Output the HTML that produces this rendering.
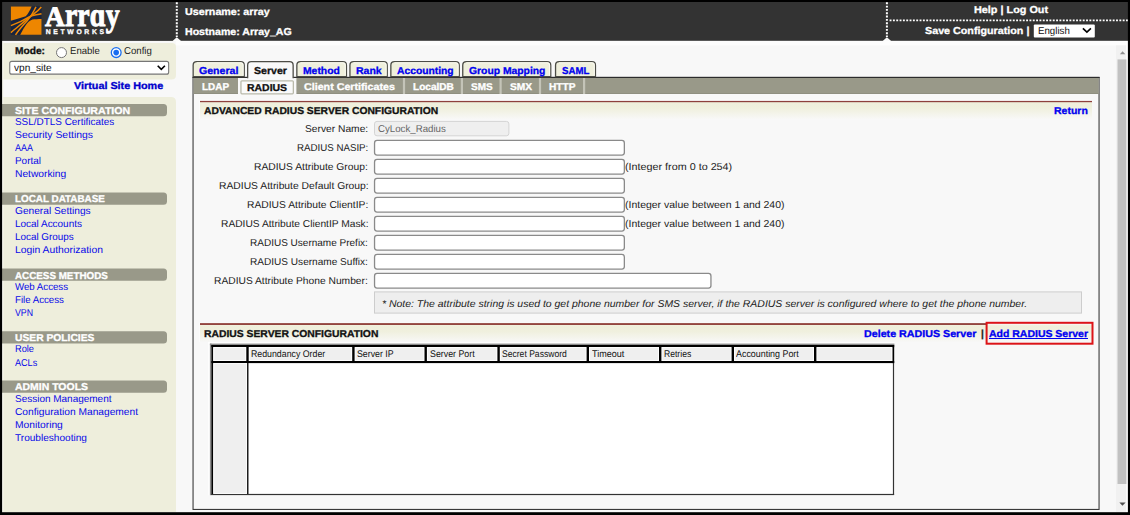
<!DOCTYPE html>
<html><head><meta charset="utf-8"><title>Array Networks</title>
<style>
html,body{margin:0;padding:0;}
body{width:1130px;height:515px;position:relative;overflow:hidden;background:#f8f8f8;font-family:"Liberation Sans",sans-serif;}
#art{position:absolute;left:0;top:0;display:block;}
.t{position:absolute;text-rendering:geometricPrecision;white-space:pre;transform-origin:0 50%;z-index:5;}

</style></head>
<body>
<svg id="art" width="1130" height="515" viewBox="0 0 1130 515">
<defs>
<linearGradient id="gb" x1="0" y1="0" x2="0" y2="1"><stop offset="0" stop-color="#f2f2de"/><stop offset="0.12" stop-color="#efefdb"/><stop offset="0.38" stop-color="#f0f0de"/><stop offset="1" stop-color="#f8f8f8"/></linearGradient>
</defs>
<rect x="0.00" y="0.00" width="1130.00" height="515.00" rx="0" fill="#f8f8f8" />
<rect x="2.00" y="2.00" width="1126.00" height="38.90" rx="0" fill="#333333" />
<rect x="176.00" y="40.90" width="952.00" height="4.40" rx="0" fill="#fdfdfd" />
<g>
<rect x="10.9" y="6.4" width="30.6" height="28.4" fill="#17233f"/>
<path d="M10.9,6.4 H31.6 C30.9,8.4 30,10.2 29,11.8 C28,13.6 27,15 25.8,16.3 C21,17.8 16,19.2 10.9,20.7 Z" fill="#ee8600"/>
<path d="M41.5,19.1 V34.8 H20.2 C21.4,32.6 22.4,30.6 23.3,29 C24.6,26.8 25.8,25 27.2,23.2 C28.8,21.6 30.4,20.4 32.4,19.6 C35,19.3 38,19.2 41.5,19.1 Z" fill="#ee8600"/>
<g fill="none" stroke="#ee8600" stroke-width="1.5">
<path d="M10.9,25.6 C17,23.4 22.5,21 27.8,17.6 S36,15.4 41.5,13.8"/>
<path d="M10.9,32.6 C15.5,28.6 21,24.4 26.8,19.4 S37,12.6 41.3,7"/>
<path d="M15.5,34.8 C18.5,30.4 22.5,25.6 27.4,20.4 S33.4,11.6 36,6.8"/>
</g></g>
<g stroke="#fff" stroke-width="2" stroke-dasharray="1.9 1.43" fill="none">
<path d="M176.8,2.3 V37"/><path d="M886.9,2.3 V37"/><path d="M889.6,20.4 H1128" stroke-width="1.9"/></g>
<path d="M172.60000000000002,41 L176.8,37.2 L181.0,41 Z" fill="#fbfbfb"/>
<path d="M882.6999999999999,41 L886.9,37.2 L891.1,41 Z" fill="#fbfbfb"/>
<rect x="1033.80" y="24.60" width="61.00" height="12.80" rx="1" fill="#fff" />
<path d="M1082.9,28.4 L1086.9,32.2 L1090.9,28.4" fill="none" stroke="#000" stroke-width="1.6"/>
<path d="M2,43 H172 Q176,43 176,47 V75 Q176,79.5 171.5,79.5 H2 Z" fill="#eeeedc"/>
<path d="M2,97 H171 Q176,97 176,102 V512 H2 Z" fill="#eeeedc"/>
<rect x="2.00" y="41.00" width="1.40" height="471.00" rx="0" fill="#f7f7ee" />
<circle cx="61.5" cy="52.6" r="5" fill="#fff" stroke="#767676" stroke-width="1"/>
<circle cx="116.2" cy="52.6" r="4.9" fill="#fff" stroke="#1a6ef0" stroke-width="1.3"/>
<circle cx="116.2" cy="52.6" r="2.8" fill="#1a6ef0"/>
<rect x="9.75" y="61.35" width="158.90" height="12.80" rx="2" fill="#fff" stroke="#767676" stroke-width="1.1" />
<path d="M157.7,65.8 L161.3,69.4 L164.9,65.8" fill="none" stroke="#000" stroke-width="1.6"/>
<path d="M2,104.0 H163.5 Q167,104.0 167,107.5 V112.7 Q167,116.2 163.5,116.2 H2 Z" fill="#999989"/>
<path d="M2,192.6 H163.5 Q167,192.6 167,196.1 V201.29999999999998 Q167,204.79999999999998 163.5,204.79999999999998 H2 Z" fill="#999989"/>
<path d="M2,268.5 H163.5 Q167,268.5 167,272.0 V277.2 Q167,280.7 163.5,280.7 H2 Z" fill="#999989"/>
<path d="M2,331.3 H163.5 Q167,331.3 167,334.8 V340.0 Q167,343.5 163.5,343.5 H2 Z" fill="#999989"/>
<path d="M2,380.5 H163.5 Q167,380.5 167,384.0 V389.2 Q167,392.7 163.5,392.7 H2 Z" fill="#999989"/>
<rect x="193.05" y="77.55" width="906.00" height="431.90" rx="0" fill="none" stroke="#3a3a3a" stroke-width="1.1" />
<rect x="193.50" y="78.00" width="905.10" height="16.00" rx="0" fill="#999989" />
<rect x="193.50" y="93.00" width="905.10" height="1.00" rx="0" fill="#8f8f80" />
<rect x="402.90" y="78.00" width="2.20" height="16.00" rx="0" fill="#c4c4b8" />
<rect x="460.80" y="78.00" width="2.20" height="16.00" rx="0" fill="#c4c4b8" />
<rect x="499.50" y="78.00" width="2.20" height="16.00" rx="0" fill="#c4c4b8" />
<rect x="538.90" y="78.00" width="2.20" height="16.00" rx="0" fill="#c4c4b8" />
<rect x="583.00" y="78.00" width="2.20" height="16.00" rx="0" fill="#c4c4b8" />
<rect x="238.00" y="78.00" width="58.40" height="16.30" rx="0" fill="#f8f8f8" />
<rect x="240.95" y="80.85" width="52.40" height="13.00" rx="1" fill="#fafafa" stroke="#b9b9aa" stroke-width="1.3" />
<rect x="192.50" y="76.80" width="907.10" height="1.20" rx="0" fill="#2c2c2c" />
<path d="M193.15,76.7 V65.2 Q193.15,61.65 196.7,61.65 H240.70000000000002 Q244.25,61.65 244.25,65.2 V76.7 Z" fill="#efefdc" stroke="#4c4c46" stroke-width="1.3"/>
<path d="M196.7,62.8 H240.70000000000002 Q243.1,62.8 243.1,65.2 V75.7" fill="none" stroke="#fbfbf1" stroke-width="1.1"/>
<path d="M296.84999999999997,76.7 V65.2 Q296.84999999999997,61.65 300.4,61.65 H342.90000000000003 Q346.45000000000005,61.65 346.45000000000005,65.2 V76.7 Z" fill="#efefdc" stroke="#4c4c46" stroke-width="1.3"/>
<path d="M300.4,62.8 H342.90000000000003 Q345.3,62.8 345.3,65.2 V75.7" fill="none" stroke="#fbfbf1" stroke-width="1.1"/>
<path d="M349.95,76.7 V65.2 Q349.95,61.65 353.5,61.65 H383.7 Q387.25,61.65 387.25,65.2 V76.7 Z" fill="#efefdc" stroke="#4c4c46" stroke-width="1.3"/>
<path d="M353.5,62.8 H383.7 Q386.09999999999997,62.8 386.09999999999997,65.2 V75.7" fill="none" stroke="#fbfbf1" stroke-width="1.1"/>
<path d="M390.84999999999997,76.7 V65.2 Q390.84999999999997,61.65 394.4,61.65 H455.7 Q459.25,61.65 459.25,65.2 V76.7 Z" fill="#efefdc" stroke="#4c4c46" stroke-width="1.3"/>
<path d="M394.4,62.8 H455.7 Q458.09999999999997,62.8 458.09999999999997,65.2 V75.7" fill="none" stroke="#fbfbf1" stroke-width="1.1"/>
<path d="M462.75,76.7 V65.2 Q462.75,61.65 466.3,61.65 H547.1999999999999 Q550.75,61.65 550.75,65.2 V76.7 Z" fill="#efefdc" stroke="#4c4c46" stroke-width="1.3"/>
<path d="M466.3,62.8 H547.1999999999999 Q549.6,62.8 549.6,65.2 V75.7" fill="none" stroke="#fbfbf1" stroke-width="1.1"/>
<path d="M555.55,76.7 V65.2 Q555.55,61.65 559.1,61.65 H591.9 Q595.45,61.65 595.45,65.2 V76.7 Z" fill="#efefdc" stroke="#4c4c46" stroke-width="1.3"/>
<path d="M559.1,62.8 H591.9 Q594.3000000000001,62.8 594.3000000000001,65.2 V75.7" fill="none" stroke="#fbfbf1" stroke-width="1.1"/>
<path d="M247.65,78.2 V65.2 Q247.65,61.65 251.2,61.65 H289.6 Q293.15000000000003,61.65 293.15000000000003,65.2 V78.2 Z" fill="#f9f9f9"/>
<path d="M247.65,78.2 V65.2 Q247.65,61.65 251.2,61.65 H289.6 Q293.15000000000003,61.65 293.15000000000003,65.2 V78.2" fill="none" stroke="#4c4c46" stroke-width="1.3"/>
<rect x="199.00" y="99.80" width="893.00" height="1.40" rx="0" fill="#fdfdfd" />
<rect x="199.00" y="99.80" width="1.00" height="19.20" rx="0" fill="#fbfbfb" />
<rect x="200.00" y="101.60" width="892.00" height="17.90" rx="0" fill="url(#gb)" />
<rect x="200.00" y="100.90" width="892.00" height="1.30" rx="0" fill="#8e403c" />
<rect x="374.50" y="121.40" width="134.40" height="14.40" rx="2.5" fill="#efefef" stroke="#d4d4d4" stroke-width="1" />
<rect x="374.55" y="140.45" width="249.80" height="14.60" rx="2.5" fill="#fff" stroke="#8a8a8a" stroke-width="1.3" />
<rect x="374.55" y="159.45" width="249.80" height="14.60" rx="2.5" fill="#fff" stroke="#8a8a8a" stroke-width="1.3" />
<rect x="374.55" y="178.45" width="249.80" height="14.60" rx="2.5" fill="#fff" stroke="#8a8a8a" stroke-width="1.3" />
<rect x="374.55" y="197.45" width="249.80" height="14.60" rx="2.5" fill="#fff" stroke="#8a8a8a" stroke-width="1.3" />
<rect x="374.55" y="216.45" width="249.80" height="14.60" rx="2.5" fill="#fff" stroke="#8a8a8a" stroke-width="1.3" />
<rect x="374.55" y="235.45" width="249.80" height="14.60" rx="2.5" fill="#fff" stroke="#8a8a8a" stroke-width="1.3" />
<rect x="374.55" y="254.45" width="249.80" height="14.60" rx="2.5" fill="#fff" stroke="#8a8a8a" stroke-width="1.3" />
<rect x="374.55" y="273.45" width="336.40" height="14.60" rx="2.5" fill="#fff" stroke="#8a8a8a" stroke-width="1.3" />
<rect x="374.50" y="291.90" width="707.00" height="21.20" rx="0" fill="#eeeeee" stroke="#cdcdcd" stroke-width="1" />
<rect x="199.00" y="322.80" width="788.00" height="1.40" rx="0" fill="#fdfdfd" />
<rect x="199.00" y="322.80" width="1.00" height="19.20" rx="0" fill="#fbfbfb" />
<rect x="200.00" y="324.60" width="892.00" height="17.90" rx="0" fill="url(#gb)" />
<rect x="200.00" y="323.10" width="787.00" height="1.90" rx="0" fill="#93453f" />
<rect x="986.60" y="322.80" width="105.90" height="20.90" rx="0" fill="none" stroke="#dc1418" stroke-width="2" />
<rect x="210.20" y="343.80" width="684.20" height="151.40" rx="0" fill="#fff" />
<rect x="208.20" y="341.90" width="686.20" height="1.80" rx="0" fill="#fefefe" />
<rect x="208.20" y="341.90" width="1.80" height="153.30" rx="0" fill="#fefefe" />
<rect x="209.90" y="343.60" width="1.60" height="151.60" rx="0" fill="#8c8c8c" />
<rect x="209.90" y="343.60" width="684.50" height="1.60" rx="0" fill="#8c8c8c" />
<rect x="211.40" y="345.00" width="682.80" height="2.10" rx="0" fill="#000" />
<rect x="211.40" y="345.00" width="1.90" height="150.00" rx="0" fill="#000" />
<rect x="211.40" y="361.00" width="682.80" height="2.10" rx="0" fill="#000" />
<rect x="892.30" y="345.00" width="1.90" height="18.10" rx="0" fill="#000" />
<rect x="892.90" y="363.00" width="1.20" height="132.00" rx="0" fill="#333" />
<rect x="211.40" y="493.90" width="682.70" height="1.20" rx="0" fill="#333" />
<rect x="213.80" y="363.60" width="32.70" height="129.80" rx="0" fill="#efefef" stroke="#fbfbfb" stroke-width="1" />
<rect x="247.00" y="363.00" width="1.50" height="131.00" rx="0" fill="#1c1c1c" />
<rect x="213.80" y="347.60" width="32.00" height="12.90" rx="0" fill="#efefef" stroke="#fdfdfd" stroke-width="1" />
<rect x="249.20" y="347.60" width="102.50" height="12.90" rx="0" fill="#efefef" stroke="#fdfdfd" stroke-width="1" />
<rect x="355.10" y="347.60" width="68.90" height="12.90" rx="0" fill="#efefef" stroke="#fdfdfd" stroke-width="1" />
<rect x="427.40" y="347.60" width="69.50" height="12.90" rx="0" fill="#efefef" stroke="#fdfdfd" stroke-width="1" />
<rect x="500.30" y="347.60" width="85.80" height="12.90" rx="0" fill="#efefef" stroke="#fdfdfd" stroke-width="1" />
<rect x="589.50" y="347.60" width="69.00" height="12.90" rx="0" fill="#efefef" stroke="#fdfdfd" stroke-width="1" />
<rect x="661.90" y="347.60" width="69.20" height="12.90" rx="0" fill="#efefef" stroke="#fdfdfd" stroke-width="1" />
<rect x="734.50" y="347.60" width="79.00" height="12.90" rx="0" fill="#efefef" stroke="#fdfdfd" stroke-width="1" />
<rect x="816.90" y="347.60" width="74.90" height="12.90" rx="0" fill="#efefef" stroke="#fdfdfd" stroke-width="1" />
<rect x="246.30" y="347.00" width="2.40" height="14.10" rx="0" fill="#000" />
<rect x="352.20" y="347.00" width="2.40" height="14.10" rx="0" fill="#000" />
<rect x="424.50" y="347.00" width="2.40" height="14.10" rx="0" fill="#000" />
<rect x="497.40" y="347.00" width="2.40" height="14.10" rx="0" fill="#000" />
<rect x="586.60" y="347.00" width="2.40" height="14.10" rx="0" fill="#000" />
<rect x="659.00" y="347.00" width="2.40" height="14.10" rx="0" fill="#000" />
<rect x="731.60" y="347.00" width="2.40" height="14.10" rx="0" fill="#000" />
<rect x="814.00" y="347.00" width="2.40" height="14.10" rx="0" fill="#000" />
<rect x="1116.00" y="45.40" width="10.30" height="466.60" rx="0" fill="#f1f1f1" />
<rect x="1126.30" y="41.00" width="1.70" height="471.00" rx="0" fill="#fefefe" />
<rect x="1117.50" y="59.40" width="8.90" height="424.60" rx="0" fill="#c1c1c1" />
<path d="M1119.9,54.2 L1122.6,51.2 L1125.3,54.2 Z" fill="#8f8f8f"/>
<path d="M1119.4,502.5 L1122.5,505.8 L1125.6,502.5 Z" fill="#505050"/>
<rect x="0.00" y="0.00" width="1130.00" height="2.00" rx="0" fill="#000" />
<rect x="0.00" y="0.00" width="2.10" height="515.00" rx="0" fill="#000" />
<rect x="1127.90" y="0.00" width="2.10" height="515.00" rx="0" fill="#000" />
<rect x="0.00" y="512.20" width="1130.00" height="2.80" rx="0" fill="#000" />
</svg>
<span class="t" style="left:44.5px;top:4px;font:normal bold 28.0px/1 'Liberation Serif', serif;color:#fff;transform:scaleX(0.9785);-webkit-text-stroke:1.0px #fff;">A</span>
<span class="t" style="left:65.4px;top:-1px;font:normal bold 33.5px/1 'Liberation Serif', serif;color:#fff;transform:scaleX(0.8304);-webkit-text-stroke:1.0px #fff;">rrɑy</span>
<span class="t" style="left:45.8px;top:30px;font:normal bold 6.8px/1 'Liberation Sans', sans-serif;color:#fff;letter-spacing:2.649px;-webkit-text-stroke:0.3px #fff;">NETWORKS</span>
<span class="t" style="left:184.8px;top:8px;font:normal bold 10.0px/1 'Liberation Sans', sans-serif;color:#fff;transform:scaleX(1.0717);-webkit-text-stroke:0.3px #fff;">Username: array</span>
<span class="t" style="left:184.8px;top:28px;font:normal bold 10.0px/1 'Liberation Sans', sans-serif;color:#fff;transform:scaleX(1.0587);-webkit-text-stroke:0.3px #fff;">Hostname: Array_AG</span>
<span class="t" style="left:973.5px;top:6px;font:normal bold 10.0px/1 'Liberation Sans', sans-serif;color:#fff;transform:scaleX(1.0840);-webkit-text-stroke:0.3px #fff;">Help | Log Out</span>
<span class="t" style="left:924.8px;top:27px;font:normal bold 10.0px/1 'Liberation Sans', sans-serif;color:#fff;transform:scaleX(1.0733);-webkit-text-stroke:0.3px #fff;">Save Configuration |</span>
<span class="t" style="left:1037.8px;top:27px;font:normal normal 10.0px/1 'Liberation Sans', sans-serif;color:#111;transform:scaleX(0.9691);">English</span>
<span class="t" style="left:15.4px;top:47px;font:normal bold 10.0px/1 'Liberation Sans', sans-serif;color:#111;transform:scaleX(1.0186);-webkit-text-stroke:0.3px #111;">Mode:</span>
<span class="t" style="left:70.0px;top:47px;font:normal normal 10.0px/1 'Liberation Sans', sans-serif;color:#222;transform:scaleX(0.9569);">Enable</span>
<span class="t" style="left:124.2px;top:47px;font:normal normal 10.0px/1 'Liberation Sans', sans-serif;color:#222;transform:scaleX(0.9617);">Config</span>
<span class="t" style="left:14.0px;top:64px;font:normal normal 10.0px/1 'Liberation Sans', sans-serif;color:#111;transform:scaleX(1.0121);">vpn_site</span>
<span class="t" style="left:73.5px;top:82px;font:normal bold 10.0px/1 'Liberation Sans', sans-serif;color:#0000cc;transform:scaleX(1.0796);-webkit-text-stroke:0.3px #0000cc;">Virtual Site Home</span>
<span class="t" style="left:15.0px;top:107px;font:normal bold 10.0px/1 'Liberation Sans', sans-serif;color:#fff;transform:scaleX(1.0598);-webkit-text-stroke:0.3px #fff;">SITE CONFIGURATION</span>
<span class="t" style="left:15.2px;top:118px;font:normal normal 10.0px/1 'Liberation Sans', sans-serif;color:#0808e8;transform:scaleX(0.9925);">SSL/DTLS Certificates</span>
<span class="t" style="left:15.2px;top:131px;font:normal normal 10.0px/1 'Liberation Sans', sans-serif;color:#0808e8;transform:scaleX(1.0394);">Security Settings</span>
<span class="t" style="left:15.2px;top:144px;font:normal normal 10.0px/1 'Liberation Sans', sans-serif;color:#0808e8;transform:scaleX(0.8993);">AAA</span>
<span class="t" style="left:15.2px;top:157px;font:normal normal 10.0px/1 'Liberation Sans', sans-serif;color:#0808e8;transform:scaleX(0.9914);">Portal</span>
<span class="t" style="left:15.2px;top:170px;font:normal normal 10.0px/1 'Liberation Sans', sans-serif;color:#0808e8;transform:scaleX(1.0234);">Networking</span>
<span class="t" style="left:15.0px;top:195px;font:normal bold 10.0px/1 'Liberation Sans', sans-serif;color:#fff;transform:scaleX(0.9867);-webkit-text-stroke:0.3px #fff;">LOCAL DATABASE</span>
<span class="t" style="left:15.2px;top:207px;font:normal normal 10.0px/1 'Liberation Sans', sans-serif;color:#0808e8;transform:scaleX(1.0161);">General Settings</span>
<span class="t" style="left:15.2px;top:220px;font:normal normal 10.0px/1 'Liberation Sans', sans-serif;color:#0808e8;transform:scaleX(0.9946);">Local Accounts</span>
<span class="t" style="left:15.2px;top:233px;font:normal normal 10.0px/1 'Liberation Sans', sans-serif;color:#0808e8;transform:scaleX(0.9868);">Local Groups</span>
<span class="t" style="left:15.2px;top:246px;font:normal normal 10.0px/1 'Liberation Sans', sans-serif;color:#0808e8;transform:scaleX(1.0332);">Login Authorization</span>
<span class="t" style="left:15.0px;top:272px;font:normal bold 10.0px/1 'Liberation Sans', sans-serif;color:#fff;transform:scaleX(0.9825);-webkit-text-stroke:0.3px #fff;">ACCESS METHODS</span>
<span class="t" style="left:15.2px;top:283px;font:normal normal 10.0px/1 'Liberation Sans', sans-serif;color:#0808e8;transform:scaleX(0.9664);">Web Access</span>
<span class="t" style="left:15.2px;top:296px;font:normal normal 10.0px/1 'Liberation Sans', sans-serif;color:#0808e8;transform:scaleX(0.9668);">File Access</span>
<span class="t" style="left:15.2px;top:309px;font:normal normal 10.0px/1 'Liberation Sans', sans-serif;color:#0808e8;transform:scaleX(0.8754);">VPN</span>
<span class="t" style="left:15.0px;top:334px;font:normal bold 10.0px/1 'Liberation Sans', sans-serif;color:#fff;transform:scaleX(1.0278);-webkit-text-stroke:0.3px #fff;">USER POLICIES</span>
<span class="t" style="left:15.2px;top:345px;font:normal normal 10.0px/1 'Liberation Sans', sans-serif;color:#0808e8;transform:scaleX(0.9233);">Role</span>
<span class="t" style="left:15.2px;top:359px;font:normal normal 10.0px/1 'Liberation Sans', sans-serif;color:#0808e8;transform:scaleX(0.9079);">ACLs</span>
<span class="t" style="left:15.0px;top:383px;font:normal bold 10.0px/1 'Liberation Sans', sans-serif;color:#fff;transform:scaleX(1.0454);-webkit-text-stroke:0.3px #fff;">ADMIN TOOLS</span>
<span class="t" style="left:15.2px;top:395px;font:normal normal 10.0px/1 'Liberation Sans', sans-serif;color:#0808e8;transform:scaleX(0.9976);">Session Management</span>
<span class="t" style="left:15.2px;top:408px;font:normal normal 10.0px/1 'Liberation Sans', sans-serif;color:#0808e8;transform:scaleX(1.0196);">Configuration Management</span>
<span class="t" style="left:15.2px;top:421px;font:normal normal 10.0px/1 'Liberation Sans', sans-serif;color:#0808e8;transform:scaleX(1.0235);">Monitoring</span>
<span class="t" style="left:15.2px;top:434px;font:normal normal 10.0px/1 'Liberation Sans', sans-serif;color:#0808e8;transform:scaleX(1.0078);">Troubleshooting</span>
<span class="t" style="left:198.8px;top:67px;font:normal bold 10.0px/1 'Liberation Sans', sans-serif;color:#0000f0;transform:scaleX(1.0577);-webkit-text-stroke:0.3px #0000f0;">General</span>
<span class="t" style="left:253.8px;top:67px;font:normal bold 10.0px/1 'Liberation Sans', sans-serif;color:#111;transform:scaleX(1.0597);-webkit-text-stroke:0.3px #111;">Server</span>
<span class="t" style="left:303.2px;top:67px;font:normal bold 10.0px/1 'Liberation Sans', sans-serif;color:#0000f0;transform:scaleX(1.0353);-webkit-text-stroke:0.3px #0000f0;">Method</span>
<span class="t" style="left:355.8px;top:67px;font:normal bold 10.0px/1 'Liberation Sans', sans-serif;color:#0000f0;transform:scaleX(1.0510);-webkit-text-stroke:0.3px #0000f0;">Rank</span>
<span class="t" style="left:396.5px;top:67px;font:normal bold 10.0px/1 'Liberation Sans', sans-serif;color:#0000f0;transform:scaleX(1.0291);-webkit-text-stroke:0.3px #0000f0;">Accounting</span>
<span class="t" style="left:469.3px;top:67px;font:normal bold 10.0px/1 'Liberation Sans', sans-serif;color:#0000f0;transform:scaleX(1.0340);-webkit-text-stroke:0.3px #0000f0;">Group Mapping</span>
<span class="t" style="left:561.5px;top:67px;font:normal bold 10.0px/1 'Liberation Sans', sans-serif;color:#0000f0;transform:scaleX(0.9667);-webkit-text-stroke:0.3px #0000f0;">SAML</span>
<span class="t" style="left:202.3px;top:83px;font:normal bold 9.8px/1 'Liberation Sans', sans-serif;color:#fff;transform:scaleX(1.0123);-webkit-text-stroke:0.3px #fff;">LDAP</span>
<span class="t" style="left:247.1px;top:84px;font:normal bold 9.8px/1 'Liberation Sans', sans-serif;color:#111;transform:scaleX(1.0676);-webkit-text-stroke:0.3px #111;">RADIUS</span>
<span class="t" style="left:304.4px;top:83px;font:normal bold 9.8px/1 'Liberation Sans', sans-serif;color:#fff;transform:scaleX(1.0911);-webkit-text-stroke:0.3px #fff;">Client Certificates</span>
<span class="t" style="left:412.6px;top:83px;font:normal bold 9.8px/1 'Liberation Sans', sans-serif;color:#fff;transform:scaleX(1.0289);-webkit-text-stroke:0.3px #fff;">LocalDB</span>
<span class="t" style="left:470.8px;top:83px;font:normal bold 9.8px/1 'Liberation Sans', sans-serif;color:#fff;transform:scaleX(1.0172);-webkit-text-stroke:0.3px #fff;">SMS</span>
<span class="t" style="left:509.6px;top:83px;font:normal bold 9.8px/1 'Liberation Sans', sans-serif;color:#fff;transform:scaleX(1.0408);-webkit-text-stroke:0.3px #fff;">SMX</span>
<span class="t" style="left:549.0px;top:83px;font:normal bold 9.8px/1 'Liberation Sans', sans-serif;color:#fff;transform:scaleX(1.0321);-webkit-text-stroke:0.3px #fff;">HTTP</span>
<span class="t" style="left:204.1px;top:107px;font:normal bold 10.0px/1 'Liberation Sans', sans-serif;color:#111;transform:scaleX(1.0306);-webkit-text-stroke:0.3px #111;">ADVANCED RADIUS SERVER CONFIGURATION</span>
<span class="t" style="left:1053.8px;top:107px;font:normal bold 10.0px/1 'Liberation Sans', sans-serif;color:#0000f0;transform:scaleX(1.0486);-webkit-text-stroke:0.3px #0000f0;">Return</span>
<span class="t" style="left:204.3px;top:330px;font:normal bold 10.0px/1 'Liberation Sans', sans-serif;color:#111;transform:scaleX(1.0348);-webkit-text-stroke:0.3px #111;">RADIUS SERVER CONFIGURATION</span>
<span class="t" style="left:864.3px;top:330px;font:normal bold 10.0px/1 'Liberation Sans', sans-serif;color:#0000f0;transform:scaleX(1.0690);-webkit-text-stroke:0.3px #0000f0;">Delete RADIUS Server</span>
<span class="t" style="left:980.8px;top:330px;font:normal bold 10.0px/1 'Liberation Sans', sans-serif;color:#222;transform:scaleX(0.9956);-webkit-text-stroke:0.3px #222;">|</span>
<span class="t" style="left:988.5px;top:330px;font:normal bold 10.0px/1 'Liberation Sans', sans-serif;color:#0000f0;transform:scaleX(1.0480);text-decoration:underline;-webkit-text-stroke:0.3px #0000f0;">Add RADIUS Server</span>
<span class="t" style="left:305.0px;top:125px;font:normal normal 10.0px/1 'Liberation Sans', sans-serif;color:#222;transform:scaleX(1.0245);">Server Name:</span>
<span class="t" style="left:296.9px;top:144px;font:normal normal 10.0px/1 'Liberation Sans', sans-serif;color:#222;transform:scaleX(0.9719);">RADIUS NASIP:</span>
<span class="t" style="left:254.4px;top:163px;font:normal normal 10.0px/1 'Liberation Sans', sans-serif;color:#222;transform:scaleX(1.0288);">RADIUS Attribute Group:</span>
<span class="t" style="left:218.5px;top:182px;font:normal normal 10.0px/1 'Liberation Sans', sans-serif;color:#222;transform:scaleX(1.0319);">RADIUS Attribute Default Group:</span>
<span class="t" style="left:246.9px;top:201px;font:normal normal 10.0px/1 'Liberation Sans', sans-serif;color:#222;transform:scaleX(1.0295);">RADIUS Attribute ClientIP:</span>
<span class="t" style="left:220.7px;top:220px;font:normal normal 10.0px/1 'Liberation Sans', sans-serif;color:#222;transform:scaleX(1.0221);">RADIUS Attribute ClientIP Mask:</span>
<span class="t" style="left:250.3px;top:239px;font:normal normal 10.0px/1 'Liberation Sans', sans-serif;color:#222;transform:scaleX(1.0007);">RADIUS Username Prefix:</span>
<span class="t" style="left:250.3px;top:258px;font:normal normal 10.0px/1 'Liberation Sans', sans-serif;color:#222;transform:scaleX(1.0070);">RADIUS Username Suffix:</span>
<span class="t" style="left:214.4px;top:277px;font:normal normal 10.0px/1 'Liberation Sans', sans-serif;color:#222;transform:scaleX(1.0248);">RADIUS Attribute Phone Number:</span>
<span class="t" style="left:377.6px;top:125px;font:normal normal 10.0px/1 'Liberation Sans', sans-serif;color:#666;transform:scaleX(0.9679);">CyLock_Radius</span>
<span class="t" style="left:625.4px;top:163px;font:normal normal 10.0px/1 'Liberation Sans', sans-serif;color:#222;transform:scaleX(1.0774);">(Integer from 0 to 254)</span>
<span class="t" style="left:625.4px;top:201px;font:normal normal 10.0px/1 'Liberation Sans', sans-serif;color:#222;transform:scaleX(1.0470);">(Integer value between 1 and 240)</span>
<span class="t" style="left:625.4px;top:220px;font:normal normal 10.0px/1 'Liberation Sans', sans-serif;color:#222;transform:scaleX(1.0470);">(Integer value between 1 and 240)</span>
<span class="t" style="left:382.1px;top:300px;font:italic normal 10.0px/1 'Liberation Sans', sans-serif;color:#222;transform:scaleX(1.0453);">* Note: The attribute string is used to get phone number for SMS server, if the RADIUS server is configured where to get the phone number.</span>
<span class="t" style="left:250.8px;top:350px;font:normal normal 9.7px/1 'Liberation Sans', sans-serif;color:#111;transform:scaleX(0.9064);">Redundancy Order</span>
<span class="t" style="left:356.9px;top:350px;font:normal normal 9.7px/1 'Liberation Sans', sans-serif;color:#111;transform:scaleX(0.9086);">Server IP</span>
<span class="t" style="left:429.6px;top:350px;font:normal normal 9.7px/1 'Liberation Sans', sans-serif;color:#111;transform:scaleX(0.9102);">Server Port</span>
<span class="t" style="left:502.2px;top:350px;font:normal normal 9.7px/1 'Liberation Sans', sans-serif;color:#111;transform:scaleX(0.8848);">Secret Password</span>
<span class="t" style="left:591.6px;top:350px;font:normal normal 9.7px/1 'Liberation Sans', sans-serif;color:#111;transform:scaleX(0.9324);">Timeout</span>
<span class="t" style="left:663.8px;top:350px;font:normal normal 9.7px/1 'Liberation Sans', sans-serif;color:#111;transform:scaleX(0.8864);">Retries</span>
<span class="t" style="left:736.3px;top:350px;font:normal normal 9.7px/1 'Liberation Sans', sans-serif;color:#111;transform:scaleX(0.9183);">Accounting Port</span>
</body></html>
